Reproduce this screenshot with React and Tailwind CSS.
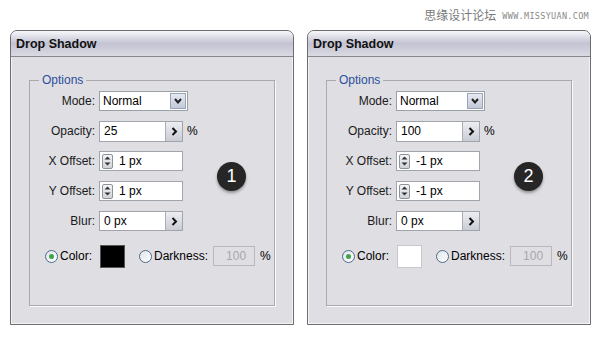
import React from "react";

const font = { fontFamily: '"Liberation Sans", Arial, sans-serif' };

function ArrowBtn() {
  return (
    <div className="w-[17px] h-full border-l border-[#a9adb4] bg-gradient-to-b from-[#eceef2] to-[#c9ccd3] flex items-center justify-center">
      <svg width="7" height="9" viewBox="0 0 7 9">
        <path d="M1.5 1 L5 4.5 L1.5 8" fill="none" stroke="#111" strokeWidth="2" />
      </svg>
    </div>
  );
}

function Spinner() {
  return (
    <div className="w-[11px] h-[15px] ml-[2px] border border-[#8e939b] rounded-[2px] bg-gradient-to-b from-[#f4f5f7] to-[#cfd2d8] flex flex-col items-center justify-center gap-[2px]">
      <svg width="7" height="4" viewBox="0 0 7 4">
        <path d="M0.5 3.5 L3.5 0.5 L6.5 3.5 Z" fill="#333" />
      </svg>
      <svg width="7" height="4" viewBox="0 0 7 4">
        <path d="M0.5 0.5 L3.5 3.5 L6.5 0.5 Z" fill="#333" />
      </svg>
    </div>
  );
}

function Row({ label, children }) {
  return (
    <div className="flex items-center h-[20px]">
      <div className="w-[69px] text-right pr-[4px] text-[12px] text-[#1a1a1a]">{label}</div>
      {children}
    </div>
  );
}

function Radio({ checked }) {
  return (
    <div className="w-[13px] h-[13px] rounded-full border border-[#4e6a8a] bg-gradient-to-br from-[#dfe4ea] to-white flex items-center justify-center">
      {checked && <div className="w-[5px] h-[5px] rounded-full bg-[#3fa34a]" />}
    </div>
  );
}

function Panel({ opacity, offset, color, badge }) {
  return (
    <div className="w-[284px] h-[295px] border border-[#6b6b70] rounded-t-[7px] bg-[#dfdee3] flex flex-col overflow-hidden">
      <div className="h-[26px] shrink-0 border-b border-[#86868e] bg-gradient-to-b from-[#f7f7fa] via-[#c3c3d3] to-[#dadae3] flex items-center pl-[5px] pt-[1px]">
        <span className="font-bold text-[12.5px] text-[#111]">Drop Shadow</span>
      </div>
      <div className="flex-1 border-l border-r border-b border-[#f4f4f6] pt-[23px] px-[17px] pb-[17px]">
        <div className="relative h-full border border-[#a9a9ae] shadow-[1px_1px_0_#fafafa] pt-[10px]">
          <div className="absolute -top-[8px] left-[9px] px-[3px] bg-[#dfdee3] text-[12px] text-[#2c4f9c] leading-[14px]">
            Options
          </div>
          <div className="flex flex-col gap-[10px]">
            <Row label="Mode:">
              <div className="w-[89px] h-[20px] border border-[#9aa0a8] bg-white flex items-center">
                <span className="flex-1 pl-[3px] text-[12px]">Normal</span>
                <div className="w-[16px] h-[16px] mr-[1px] border border-[#9aa4b6] bg-gradient-to-b from-[#e6eaf2] to-[#c2c9d8] flex items-center justify-center">
                  <svg width="8" height="6" viewBox="0 0 8 6">
                    <path d="M1 1 L4 4.5 L7 1" fill="none" stroke="#222" strokeWidth="2" />
                  </svg>
                </div>
              </div>
            </Row>
            <Row label="Opacity:">
              <div className="w-[84px] h-[21px] border border-[#a0a5ad] bg-white flex items-center">
                <span className="flex-1 pl-[4px] text-[12px]">{opacity}</span>
                <ArrowBtn />
              </div>
              <span className="ml-[4px] text-[12px]">%</span>
            </Row>
            <Row label="X Offset:">
              <div className="w-[84px] h-[20px] border border-[#a0a5ad] bg-white flex items-center">
                <Spinner />
                <span className="pl-[6px] text-[12px]">{offset} px</span>
              </div>
            </Row>
            <Row label="Y Offset:">
              <div className="w-[84px] h-[20px] border border-[#a0a5ad] bg-white flex items-center">
                <Spinner />
                <span className="pl-[6px] text-[12px]">{offset} px</span>
              </div>
            </Row>
            <Row label="Blur:">
              <div className="w-[84px] h-[20px] border border-[#a0a5ad] bg-white flex items-center">
                <span className="flex-1 pl-[4px] text-[12px]">0 px</span>
                <ArrowBtn />
              </div>
            </Row>
            <div className="flex items-center h-[24px] mt-[3px] pl-[15px] text-[12px]">
              <Radio checked />
              <span className="ml-[2px]">Color:</span>
              <div
                className={
                  "ml-[8px] w-[25px] h-[23px] border " +
                  (color === "black" ? "bg-black border-[#555]" : "bg-white border-[#c8c8cc]")
                }
              />
              <div className="ml-[14px]">
                <Radio />
              </div>
              <span className="ml-[2px]">Darkness:</span>
              <div className="ml-[5px] w-[42px] h-[20px] border border-[#b9b9bd] flex items-center pl-[12px] text-[#a8a8ac]">
                100
              </div>
              <span className="ml-[5px]">%</span>
            </div>
          </div>
          <div className="absolute left-[187px] top-[81px] w-[29px] h-[29px] rounded-full bg-[#262626] shadow-[0_2px_3px_rgba(0,0,0,0.35)] flex items-center justify-center text-white text-[18px]">
            {badge}
          </div>
        </div>
      </div>
    </div>
  );
}

export default function App() {
  return (
    <div className="w-[600px] h-[350px] bg-white overflow-hidden" style={font}>
      <div className="h-[30px] flex justify-end items-start pt-[8px] pr-[11px]">
        <span className="text-[12px] text-[#7a7a7a] leading-[14px]" style={{ fontFamily: '"Noto Sans CJK SC", sans-serif' }}>
          思缘设计论坛
        </span>
        <span className="ml-[6px] mt-[3px] text-[8.5px] tracking-[0.3px] text-[#8a8a8a] leading-[10px]" style={{ fontFamily: '"DejaVu Sans Mono", monospace' }}>
          WWW.MISSYUAN.COM
        </span>
      </div>
      <div className="flex gap-[13px] pl-[10px]">
        <Panel opacity="25" offset="1" color="black" badge="1" />
        <Panel opacity="100" offset="-1" color="white" badge="2" />
      </div>
    </div>
  );
}
